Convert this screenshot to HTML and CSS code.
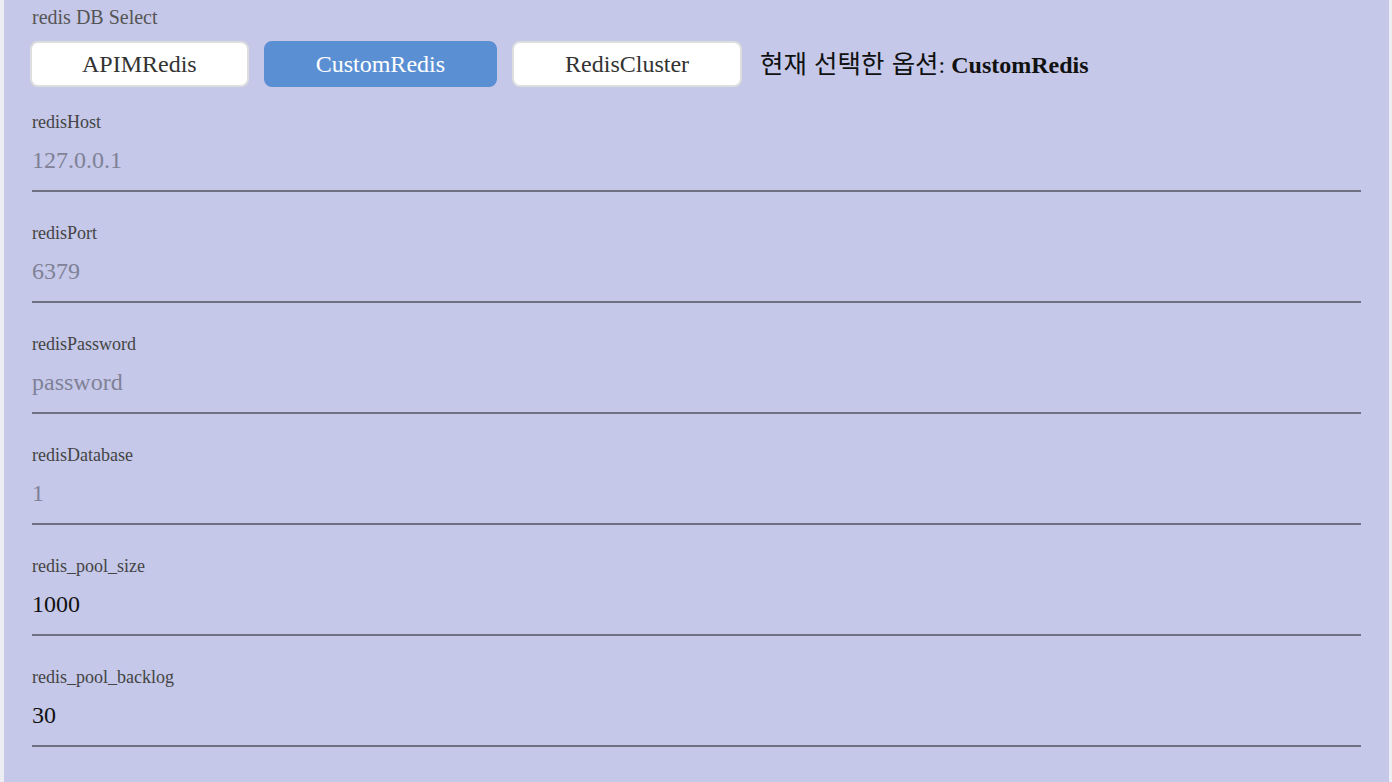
FILE: index.html
```html
<!DOCTYPE html>
<html lang="ko">
<head>
<meta charset="utf-8">
<title>redis DB Select</title>
<link rel="stylesheet" href="styles.css">
</head>
<body>
<div class="panel">
  <div class="section-label">redis DB Select</div>
  <div class="select-row">
    <button class="opt">APIMRedis</button>
    <button class="opt active">CustomRedis</button>
    <button class="opt">RedisCluster</button>
    <div class="status"><span class="status-ko">현재 선택한 옵션</span>: <b>CustomRedis</b></div>
  </div>
  <div class="fields">
    <div class="field">
      <label class="field-label">redisHost</label>
      <input class="field-input" type="text" placeholder="127.0.0.1">
    </div>
    <div class="field">
      <label class="field-label">redisPort</label>
      <input class="field-input" type="text" placeholder="6379">
    </div>
    <div class="field">
      <label class="field-label">redisPassword</label>
      <input class="field-input" type="text" placeholder="password">
    </div>
    <div class="field">
      <label class="field-label">redisDatabase</label>
      <input class="field-input" type="text" placeholder="1">
    </div>
    <div class="field">
      <label class="field-label">redis_pool_size</label>
      <input class="field-input" type="text" value="1000">
    </div>
    <div class="field">
      <label class="field-label">redis_pool_backlog</label>
      <input class="field-input" type="text" value="30">
    </div>
  </div>
</div>
</body>
</html>
```
FILE: styles.css
```css
html, body {
  margin: 0;
  padding: 0;
}
body {
  background: #eceef4;
  font-family: "Liberation Serif", "Times New Roman", "Noto Sans CJK KR", serif;
}
.panel {
  margin: 0 3px 0 4px;
  min-height: 100vh;
  box-sizing: border-box;
  background: #c5c8e8;
  padding: 6px 28px 30px 28px;
}
.section-label {
  font-size: 20px;
  line-height: 22px;
  color: #555;
}
.select-row {
  display: flex;
  align-items: center;
  gap: 15px;
  margin: 13px 0 0 -2px;
}
.opt {
  height: 46px;
  padding: 0 50px;
  border: 2px solid #dedede;
  border-radius: 8px;
  background: #fff;
  color: #333;
  font-family: "Liberation Serif", "Times New Roman", serif;
  font-size: 24px;
  line-height: 28px;
  cursor: pointer;
}
.opt:last-of-type {
  padding: 0 51px;
}
.opt.active {
  background: #5b8fd4;
  border-color: #5b8fd4;
  color: #fff;
}
.status {
  margin-left: 3px;
  font-size: 24px;
  line-height: 28px;
  color: #111;
}
.status-ko {
  font-family: "Noto Sans CJK KR", sans-serif;
  font-size: 25.5px;
  line-height: 1;
}
.status b {
  font-weight: bold;
}
.fields {
  display: flex;
  flex-direction: column;
  gap: 30px;
  margin-top: 24px;
}
.field {
  display: flex;
  flex-direction: column;
}
.field-label {
  font-size: 18px;
  line-height: 22px;
  color: #444;
}
.field-input {
  display: block;
  width: 100%;
  box-sizing: border-box;
  margin: 0;
  padding: 13px 0 16px 0;
  border: none;
  border-bottom: 2px solid #6f7182;
  background: transparent;
  font-family: "Liberation Serif", "Times New Roman", serif;
  font-size: 24px;
  line-height: 28px;
  height: 59px;
  color: #111;
  outline: none;
}
.field-input::placeholder {
  color: #7f8197;
  opacity: 1;
}
```
